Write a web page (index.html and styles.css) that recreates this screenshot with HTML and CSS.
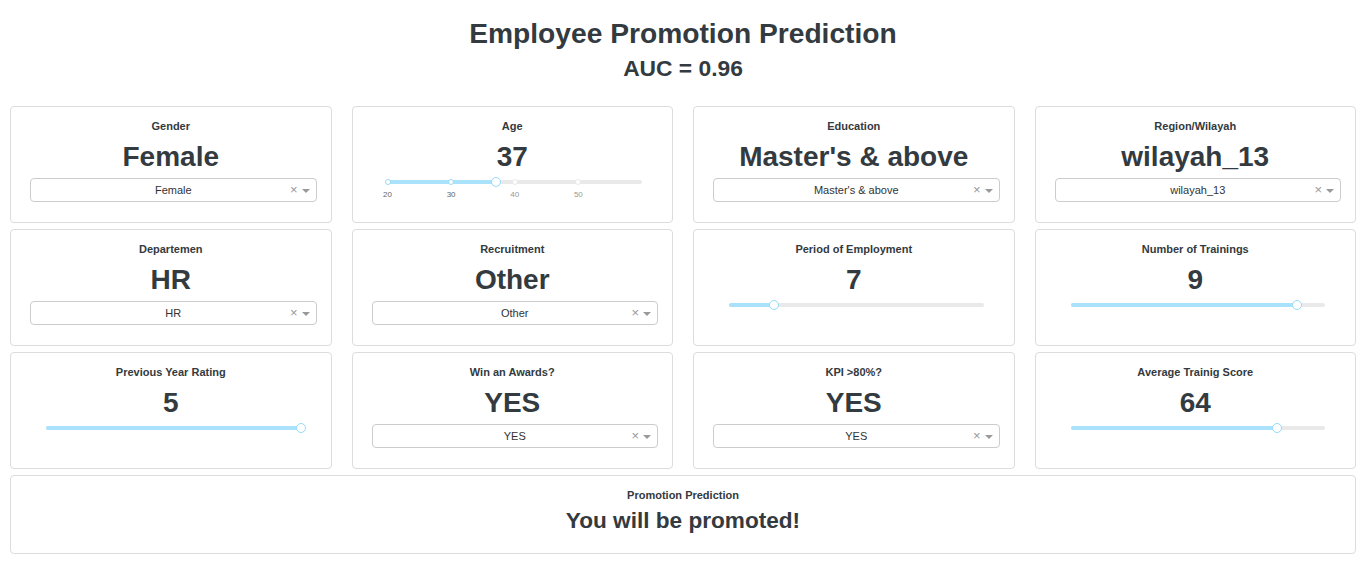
FILE: index.html
```html
<!DOCTYPE html>
<html>
<head>
<meta charset="utf-8">
<link rel="stylesheet" href="styles.css">
</head>
<body>
<header class="header">
  <h1 class="title">Employee Promotion Prediction</h1>
  <h2 class="subtitle">AUC = 0.96</h2>
</header>
<main class="grid">
  <section class="card">
    <div class="label">Gender</div>
    <div class="value">Female</div>
    <div class="select"><span class="sel-text">Female</span><span class="sel-clear">×</span><span class="sel-arrow"></span></div>
  </section>
  <section class="card">
    <div class="label">Age</div>
    <div class="value">37</div>
    <div class="slider">
      <div class="rail"></div>
      <div class="track" style="width:42.5%"></div>
      <span class="dot active" style="left:0%"></span>
      <span class="dot active" style="left:25%"></span>
      <span class="dot" style="left:50%"></span>
      <span class="dot" style="left:75%"></span>
      <span class="handle" style="left:42.5%"></span>
    </div>
    <div class="marks">
      <span class="mark active" style="left:0%">20</span>
      <span class="mark active" style="left:25%">30</span>
      <span class="mark" style="left:50%">40</span>
      <span class="mark" style="left:75%">50</span>
    </div>
  </section>
  <section class="card">
    <div class="label">Education</div>
    <div class="value">Master's &amp; above</div>
    <div class="select"><span class="sel-text">Master's &amp; above</span><span class="sel-clear">×</span><span class="sel-arrow"></span></div>
  </section>
  <section class="card">
    <div class="label">Region/Wilayah</div>
    <div class="value">wilayah_13</div>
    <div class="select"><span class="sel-text">wilayah_13</span><span class="sel-clear">×</span><span class="sel-arrow"></span></div>
  </section>

  <section class="card">
    <div class="label">Departemen</div>
    <div class="value">HR</div>
    <div class="select"><span class="sel-text">HR</span><span class="sel-clear">×</span><span class="sel-arrow"></span></div>
  </section>
  <section class="card">
    <div class="label">Recruitment</div>
    <div class="value">Other</div>
    <div class="select"><span class="sel-text">Other</span><span class="sel-clear">×</span><span class="sel-arrow"></span></div>
  </section>
  <section class="card">
    <div class="label">Period of Employment</div>
    <div class="value">7</div>
    <div class="slider">
      <div class="rail"></div>
      <div class="track" style="width:17.6%"></div>
      <span class="handle" style="left:17.6%"></span>
    </div>
  </section>
  <section class="card">
    <div class="label">Number of Trainings</div>
    <div class="value">9</div>
    <div class="slider">
      <div class="rail"></div>
      <div class="track" style="width:88.9%"></div>
      <span class="handle" style="left:88.9%"></span>
    </div>
  </section>

  <section class="card">
    <div class="label">Previous Year Rating</div>
    <div class="value">5</div>
    <div class="slider">
      <div class="rail"></div>
      <div class="track" style="width:100%"></div>
      <span class="handle" style="left:100%"></span>
    </div>
  </section>
  <section class="card">
    <div class="label">Win an Awards?</div>
    <div class="value">YES</div>
    <div class="select"><span class="sel-text">YES</span><span class="sel-clear">×</span><span class="sel-arrow"></span></div>
  </section>
  <section class="card">
    <div class="label">KPI &gt;80%?</div>
    <div class="value">YES</div>
    <div class="select"><span class="sel-text">YES</span><span class="sel-clear">×</span><span class="sel-arrow"></span></div>
  </section>
  <section class="card">
    <div class="label">Average Trainig Score</div>
    <div class="value">64</div>
    <div class="slider">
      <div class="rail"></div>
      <div class="track" style="width:81%"></div>
      <span class="handle" style="left:81%"></span>
    </div>
  </section>

  <section class="card result">
    <div class="label">Promotion Prediction</div>
    <div class="result-text">You will be promoted!</div>
  </section>
</main>
</body>
</html>
```

FILE: styles.css
```css
* { box-sizing: border-box; }

body {
  margin: 0;
  background: #ffffff;
  color: #333a40;
  font-family: "Liberation Sans", Arial, sans-serif;
}

.header {
  text-align: center;
  padding-top: 16px;
  height: 106px;
}

.title {
  margin: 0;
  font-size: 28.2px;
  line-height: 34px;
  font-weight: bold;
}

.subtitle {
  margin: 1px 0 0;
  font-size: 22.8px;
  line-height: 34px;
  font-weight: bold;
}

.grid {
  display: grid;
  grid-template-columns: repeat(4, 1fr);
  grid-auto-rows: 117px;
  column-gap: 20px;
  row-gap: 6px;
  padding: 0 10px;
}

.card {
  border: 1px solid #dcdcdc;
  border-radius: 4px;
  padding-top: 11px;
  text-align: center;
  background: #fff;
}

.label {
  font-size: 11px;
  line-height: 16px;
  font-weight: bold;
}

.value {
  margin-top: 7px;
  font-size: 28px;
  line-height: 32px;
  font-weight: bold;
}

.select {
  position: relative;
  margin: 5px 14px 0 19px;
  height: 24px;
  border: 1px solid #cccccc;
  border-radius: 4px;
  display: flex;
  align-items: center;
  justify-content: center;
  font-size: 11px;
}

.sel-text {
  color: #333;
}

.sel-clear {
  position: absolute;
  right: 18px;
  top: 3px;
  font-size: 13px;
  line-height: 16px;
  color: #999;
}

.sel-arrow {
  position: absolute;
  right: 6px;
  top: 10px;
  width: 0;
  height: 0;
  border-left: 4px solid transparent;
  border-right: 4px solid transparent;
  border-top: 4px solid #999;
}

.slider {
  position: relative;
  margin: 2px 30px 0 35px;
  height: 14px;
}

.rail, .track {
  position: absolute;
  left: 0;
  top: 5px;
  height: 4px;
  border-radius: 2px;
}

.rail {
  width: 100%;
  background: #e9e9e9;
}

.track {
  background: #abe2fb;
}

.dot {
  position: absolute;
  top: 4px;
  width: 6px;
  height: 6px;
  margin-left: -3px;
  border-radius: 50%;
  background: #fff;
  border: 1.5px solid #e9e9e9;
}

.dot.active {
  border-color: #96dbfa;
}

.handle {
  position: absolute;
  top: 2px;
  width: 10px;
  height: 10px;
  margin-left: -5px;
  border-radius: 50%;
  background: #fff;
  border: 1.5px solid #96dbfa;
}

.marks {
  position: relative;
  margin: 0 30px 0 35px;
  height: 12px;
}

.mark {
  position: absolute;
  top: 1px;
  transform: translateX(-50%);
  font-size: 8px;
  line-height: 10px;
  color: #999;
}

.mark.active {
  color: #666;
}

.result {
  grid-column: 1 / -1;
  height: 79px;
}

.result-text {
  margin-top: 5px;
  font-size: 22.6px;
  line-height: 26px;
  font-weight: bold;
}
```
